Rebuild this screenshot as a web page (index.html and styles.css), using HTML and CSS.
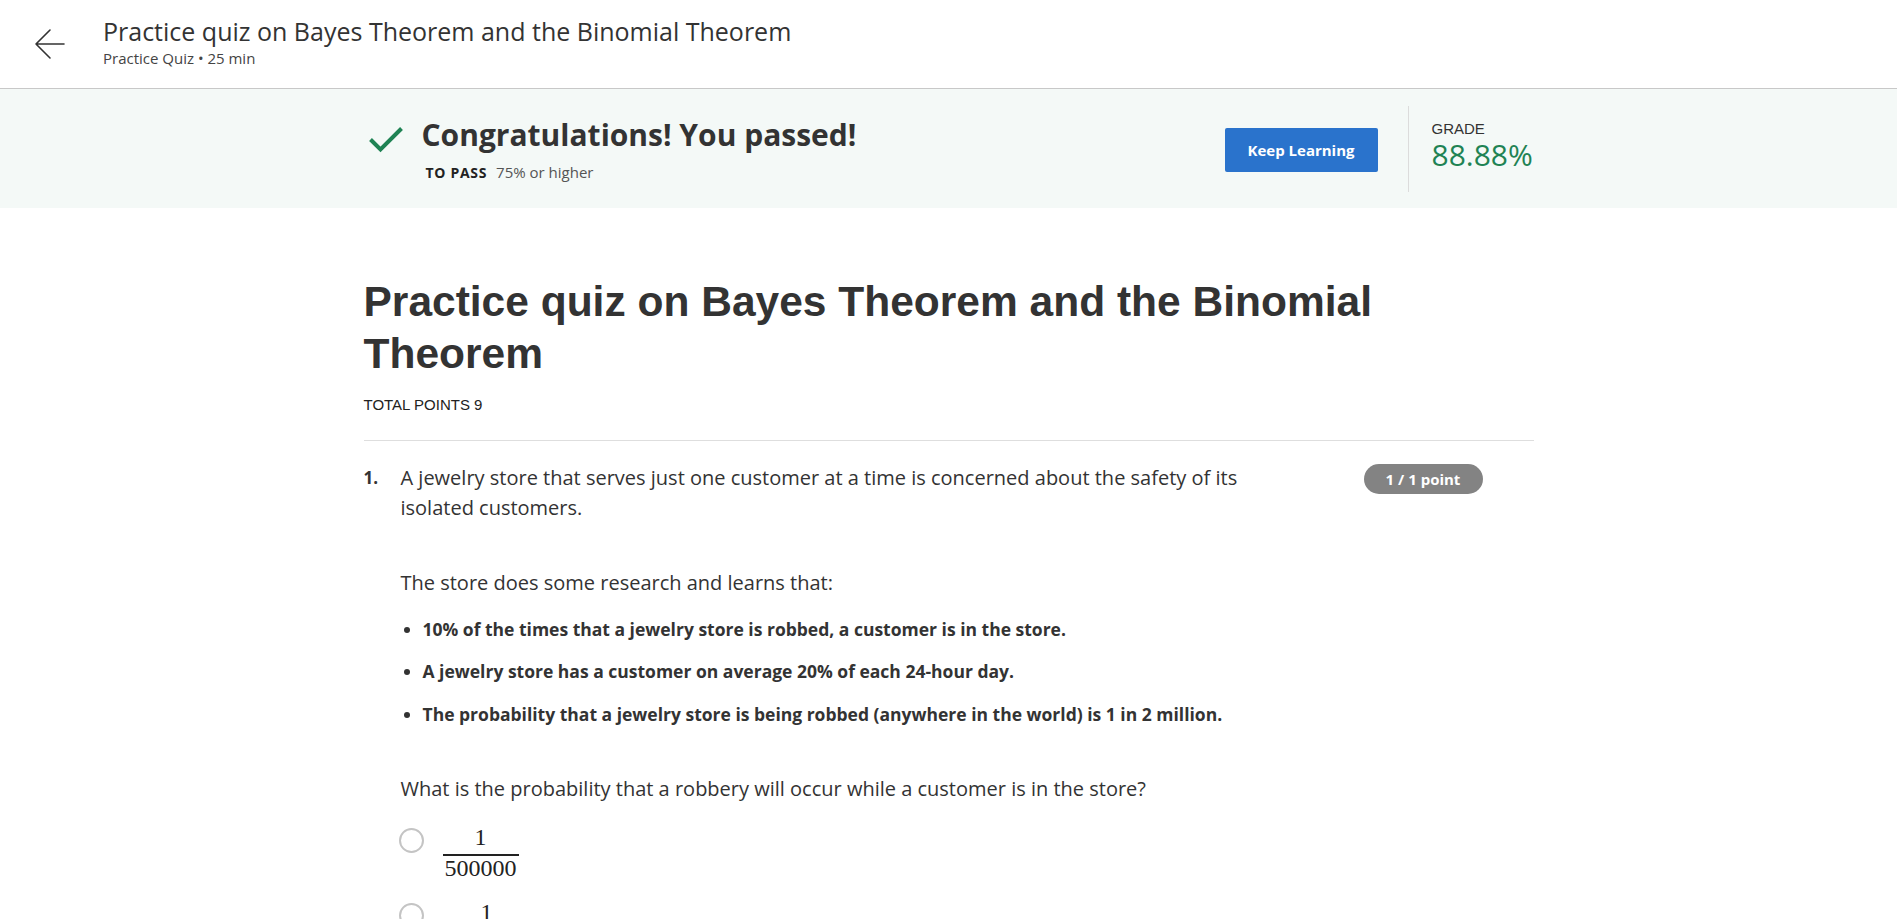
FILE: index.html
```html
<!DOCTYPE html>
<html lang="en">
<head>
<meta charset="utf-8">
<title>Practice quiz on Bayes Theorem and the Binomial Theorem</title>
<link rel="stylesheet" href="styles.css">
</head>
<body>
<header class="topbar">
  <button class="back" aria-label="Back">
    <svg width="32" height="32" viewBox="0 0 32 32" fill="none" stroke="#333" stroke-width="1.6" stroke-linecap="round" stroke-linejoin="round">
      <path d="M30 16H2M16 2L2 16l14 14"/>
    </svg>
  </button>
  <div class="topbar-text">
    <div class="topbar-title">Practice quiz on Bayes Theorem and the Binomial Theorem</div>
    <div class="topbar-sub">Practice Quiz &bull; 25 min</div>
  </div>
</header>

<section class="banner">
  <div class="container banner-inner">
    <div class="result">
      <svg class="check" width="34" height="26" viewBox="0 0 34 26" fill="none" stroke="#1f8354" stroke-width="4">
        <path d="M1.5 12.5l10 10L32.5 1.5"/>
      </svg>
      <div class="result-text">
        <h2 class="congrats">Congratulations! You passed!</h2>
        <div class="to-pass"><span class="to-pass-label">TO PASS</span> 75% or higher</div>
      </div>
    </div>
    <div class="actions">
      <button class="keep">Keep Learning</button>
      <div class="grade">
        <div class="grade-label">GRADE</div>
        <div class="grade-value">88.88%</div>
      </div>
    </div>
  </div>
</section>

<main class="container content">
  <h1 class="quiz-title">Practice quiz on Bayes Theorem and the Binomial Theorem</h1>
  <div class="total">TOTAL POINTS 9</div>
  <hr class="rule">

  <div class="question">
    <div class="qnum">1.</div>
    <div class="qbody">
      <p class="qtext">A jewelry store that serves just one customer at a time is concerned about the safety of its isolated customers.</p>
      <p class="qtext gap">The store does some research and learns that:</p>
      <ul class="facts">
        <li>10% of the times that a jewelry store is robbed, a customer is in the store.</li>
        <li>A jewelry store has a customer on average 20% of each 24-hour day.</li>
        <li>The probability that a jewelry store is being robbed (anywhere in the world) is 1 in 2 million.</li>
      </ul>
      <p class="qtext ask">What is the probability that a robbery will occur while a customer is in the store?</p>
      <div class="options">
        <label class="option">
          <span class="radio"></span>
          <span class="frac"><span class="num">1</span><span class="den">500000</span></span>
        </label>
        <label class="option">
          <span class="radio"></span>
          <span class="frac"><span class="num">1</span><span class="den">4000000</span></span>
        </label>
      </div>
    </div>
    <div class="qpoints"><span class="badge">1 / 1 point</span></div>
  </div>
</main>
</body>
</html>
```

FILE: styles.css
```css
html, body {
  margin: 0;
  padding: 0;
  background: #fff;
  color: #333;
  font-family: "Open Sans", "Noto Sans", sans-serif;
}

.container {
  width: 1170px;
  margin: 0 auto;
  box-sizing: border-box;
}

/* top bar */
.topbar {
  height: 89px;
  box-sizing: border-box;
  border-bottom: 1px solid #c8c8c8;
  display: flex;
  align-items: flex-start;
}

.back {
  margin: 28px 0 0 34px;
  padding: 0;
  border: 0;
  background: none;
  width: 32px;
  height: 32px;
  display: flex;
}

.topbar-text {
  margin: 13.5px 0 0 37px;
}

.topbar-title {
  font-size: 25px;
  line-height: 34px;
  color: #333;
  font-weight: 400;
}

.topbar-sub {
  font-size: 15px;
  line-height: 21px;
  color: #444;
}

/* banner */
.banner {
  background: #f4f9f7;
  height: 119px;
}

.banner-inner {
  display: flex;
  justify-content: space-between;
  height: 100%;
}

.result {
  display: flex;
  align-items: flex-start;
  padding-top: 23px;
}

.check {
  margin: 15px 0 0 5px;
}

.result-text {
  margin-left: 19px;
}

.congrats {
  margin: 0;
  font-size: 30px;
  line-height: 46px;
  font-weight: 700;
  color: #333;
}

.to-pass {
  margin: 4px 0 0 4px;
  font-size: 15px;
  line-height: 20px;
  color: #555;
}

.to-pass-label {
  font-weight: 700;
  color: #222;
  margin-right: 5px;
  font-size: 14px;
  letter-spacing: 0.7px;
}

.actions {
  display: flex;
  align-items: stretch;
  padding: 17px 0 16px;
}

.keep {
  align-self: center;
  margin-top: 2px;
  width: 153px;
  height: 44px;
  border: 0;
  border-radius: 2px;
  background: #2a73cc;
  color: #fff;
  font-family: "Open Sans", sans-serif;
  font-weight: 700;
  font-size: 15px;
  margin-right: 30px;
}

.grade {
  border-left: 1px solid #dcdcdc;
  padding: 14px 0 0 23px;
  width: 102px;
}

.grade-label {
  font-family: "Liberation Sans", Arial, sans-serif;
  font-size: 15px;
  line-height: 17px;
  color: #333;
}

.grade-value {
  font-size: 30px;
  line-height: 35px;
  color: #1f8354;
  font-weight: 400;
}

/* main */
.content {
  padding-top: 68px;
}

.quiz-title {
  margin: 0;
  font-family: "Liberation Sans", Arial, sans-serif;
  font-weight: 700;
  font-size: 42.5px;
  line-height: 52px;
  color: #333;
}

.total {
  margin-top: 16px;
  font-family: "Liberation Sans", Arial, sans-serif;
  font-size: 15px;
  line-height: 17px;
  color: #222;
}

.rule {
  margin: 27px 0 0;
  border: 0;
  border-top: 1px solid #dedede;
}

.question {
  display: flex;
  margin-top: 22px;
}

.qnum {
  width: 37px;
  flex: none;
  font-weight: 700;
  font-size: 17px;
  line-height: 30px;
}

.qbody {
  width: 890px;
  flex: none;
}

.qtext {
  margin: 0;
  font-size: 20px;
  line-height: 30px;
  color: #333;
}

.qtext.gap {
  margin-top: 45px;
}

.facts {
  margin: 18.5px 0 0;
  padding-left: 22px;
}

.facts li {
  font-size: 17.5px;
  font-weight: 700;
  line-height: 25px;
  margin-bottom: 17.5px;
  color: #333;
}

.facts li:last-child {
  margin-bottom: 0;
}

.qtext.ask {
  margin-top: 47.5px;
}

.options {
  margin-top: 21px;
}

.option {
  display: flex;
  align-items: flex-start;
  margin-bottom: 19.5px;
}

.radio {
  width: 21px;
  height: 21px;
  border: 2px solid #c4c4c4;
  border-radius: 50%;
  margin: 3px 0 0 -2px;
  flex: none;
}

.frac {
  display: inline-flex;
  flex-direction: column;
  align-items: center;
  margin-left: 19px;
  font-family: "Liberation Serif", "Times New Roman", serif;
  font-size: 24px;
  line-height: 24px;
  color: #222;
}

.num {
  padding: 0 4px 5px;
}

.den {
  border-top: 2px solid #222;
  padding: 0 2px;
}

.qpoints {
  flex: 1;
  display: flex;
  justify-content: flex-end;
  align-items: flex-start;
  padding-right: 51px;
}

.badge {
  display: inline-block;
  height: 30px;
  width: 119px;
  margin-top: 1px;
  border-radius: 15px;
  background: #838383;
  color: #fff;
  font-weight: 700;
  font-size: 15px;
  line-height: 30px;
  text-align: center;
}
```
